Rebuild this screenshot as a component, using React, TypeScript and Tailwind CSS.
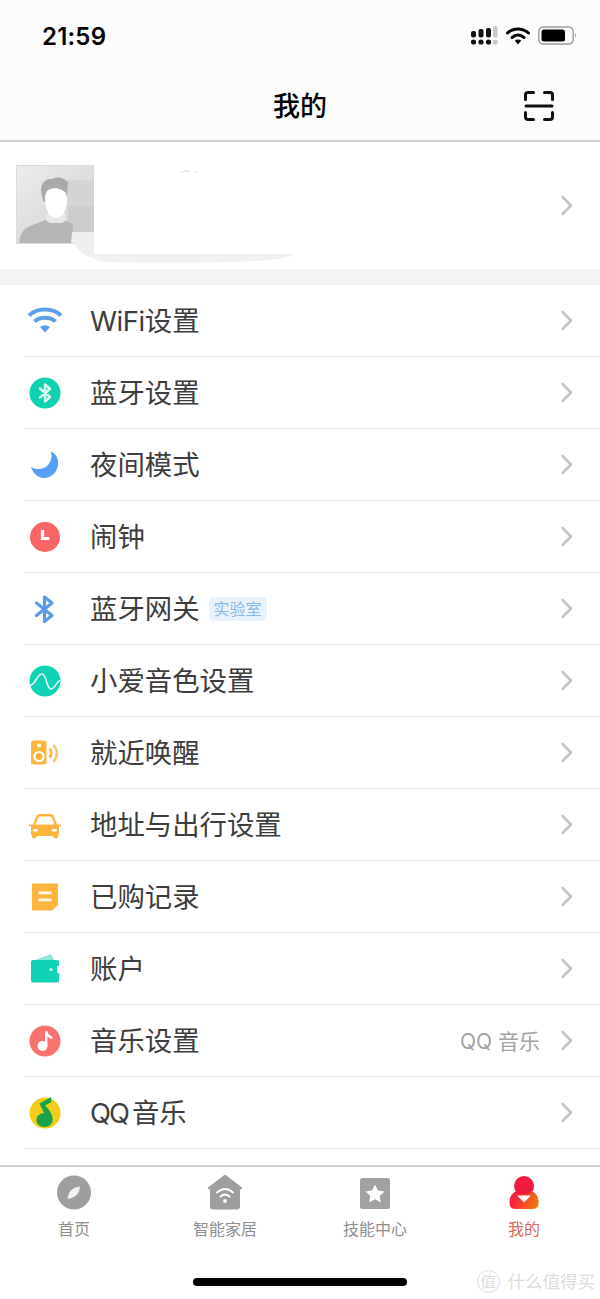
import React from "react";

const cjk = { fontFamily: '"Inter","Noto Sans CJK SC","Noto Sans",sans-serif' };

const Chevron = () => (
  <svg width="14" height="22" viewBox="0 0 14 22" fill="none">
    <path d="M2.5 2 L11 10.5 L2.5 19" stroke="#c4c4c4" strokeWidth="2.6" strokeLinecap="round" strokeLinejoin="round" />
  </svg>
);

const W = 40;
const Wifi = () => (
  <svg width={W} height={W} viewBox="0 0 40 40">
    <path d="M4 14.5 C12 6.5 28 6.5 36 14.5" stroke="#5a9fe8" strokeWidth="4" fill="none" />
    <path d="M9.5 20.5 C15 15.5 25 15.5 30.5 20.5" stroke="#5a9fe8" strokeWidth="4" fill="none" />
    <path d="M15 26 Q20 22.5 25 26 L20 31.5 Z" fill="#5a9fe8" />
  </svg>
);
const BtCircle = () => (
  <svg width={W} height={W} viewBox="0 0 40 40">
    <circle cx="20" cy="20" r="15.5" fill="#0fd1b0" />
    <path d="M15 15.5 L25 24 L20 28.5 V11.5 L25 16 L15 24.5" stroke="#fff" strokeWidth="2.4" fill="none" strokeLinejoin="round" strokeLinecap="round" opacity=".85" />
  </svg>
);
const Moon = () => (
  <svg width={W} height={W} viewBox="0 0 40 40">
    <path d="M25.5 6.5 C31.5 8.5 34 14.5 33 20.5 C31.8 28 25.5 33 19.5 33 C13 33 8 28.5 6 22 C12 25.5 19 24.5 23 20 C26.5 16 27.5 10.5 25.5 6.5 Z" fill="#559ff5" />
  </svg>
);
const Clock = () => (
  <svg width={W} height={W} viewBox="0 0 40 40">
    <circle cx="20" cy="20" r="15" fill="#fb6565" />
    <path d="M17.5 13 V21.5 H24.5" stroke="#fff" strokeWidth="3.2" fill="none" />
  </svg>
);
const Bt = () => (
  <svg width={W} height={W} viewBox="0 0 40 40">
    <path d="M11.5 14 L27 26.5 L19.5 32.5 V8 L27 14 L11.5 26.5" stroke="#5a9ae6" strokeWidth="3.2" fill="none" strokeLinejoin="round" strokeLinecap="round" />
  </svg>
);
const Wave = () => (
  <svg width={W} height={W} viewBox="0 0 40 40">
    <circle cx="20" cy="20" r="15.5" fill="#10d2b4" />
    <path d="M5 24.5 C10 24.5 12 13 17 13 C22 13 21 28 26 28 C30 28 31 21 35 19.5" stroke="#fff" strokeWidth="1.5" fill="none" opacity=".92" />
  </svg>
);
const Speaker = () => (
  <svg width={W} height={W} viewBox="0 0 40 40">
    <rect x="6" y="7.5" width="15.5" height="24" rx="2.2" fill="#fcb63e" />
    <circle cx="14" cy="12.5" r="2" fill="#fff" />
    <circle cx="14" cy="23.5" r="4.6" fill="none" stroke="#fff" strokeWidth="2" />
    <path d="M24.5 15.5 Q28 20 24.5 24.5" stroke="#fcb63e" strokeWidth="2.6" fill="none" />
    <path d="M28.5 12 Q35.5 20.5 28.5 29" stroke="#fcc76a" strokeWidth="2.6" fill="none" />
  </svg>
);
const Car = () => (
  <svg width={W} height={W} viewBox="0 0 40 40">
    <path d="M9 20 L12 12.5 Q12.7 10.2 15 10.2 H25 Q27.3 10.2 28 12.5 L31 20" stroke="#fdb53e" strokeWidth="2.4" fill="none" />
    <path d="M4 19.5 H36 V21 H34 V29 Q34 31 32 31 H8 Q6 31 6 29 V21 H4 Z" fill="#fdb53e" />
    <rect x="7" y="30" width="4.5" height="3.2" rx="1.2" fill="#fdb53e" />
    <rect x="28.5" y="30" width="4.5" height="3.2" rx="1.2" fill="#fdb53e" />
    <ellipse cx="10.5" cy="25.2" rx="2.6" ry="1.5" fill="#fff" />
    <ellipse cx="29.5" cy="25.2" rx="2.6" ry="1.5" fill="#fff" />
  </svg>
);
const Note = () => (
  <svg width={W} height={W} viewBox="0 0 40 40">
    <path d="M7 6.5 H33 V28 L27 33.5 H7 Z" fill="#fdb53e" />
    <rect x="13.5" y="14.5" width="13" height="2.8" fill="#fff" opacity=".9" />
    <rect x="13.5" y="21.5" width="13" height="2.8" fill="#fff" opacity=".9" />
  </svg>
);
const Wallet = () => (
  <svg width={W} height={W} viewBox="0 0 40 40">
    <path d="M10 11 L25 5.5 Q26.5 5 27 6.5 L29 11 Z" fill="#8ee8d8" />
    <path d="M6 13 Q6 11 8 11 H32 Q34 11 34 13 V17 H32 V24 H34 V31 Q34 33.5 32 33.5 H8 Q6 33.5 6 31 Z" fill="#10d2b4" />
    <circle cx="26" cy="20.5" r="1.5" fill="#d5f7f1" />
  </svg>
);
const Music = () => (
  <svg width={W} height={W} viewBox="0 0 40 40">
    <circle cx="20" cy="20" r="15.5" fill="#f97470" />
    <circle cx="17.5" cy="25" r="5" fill="#fff" />
    <path d="M21.2 25 V10.5 Q22.2 15.5 27.2 17" stroke="#fff" strokeWidth="2.4" fill="none" />
  </svg>
);
const QQ = () => (
  <svg width={W} height={W} viewBox="0 0 40 40">
    <circle cx="20" cy="20" r="15.5" fill="#f5cb1c" />
    <path d="M14.5 10.5 L26 4 L26.5 9 L20 12.5 C24 16 28 22 27.5 27 L22 26 L14.5 10.5 Z" fill="#16a34a" />
    <ellipse cx="19.5" cy="27" rx="8.2" ry="7" fill="#16a34a" />
  </svg>
);

const rows: { icon: React.ReactNode; label: React.ReactNode; tag?: string; right?: string }[] = [
  { icon: <Wifi />, label: <><span className="tracking-[-0.4px]">WiFi</span>设置</> },
  { icon: <BtCircle />, label: "蓝牙设置" },
  { icon: <Moon />, label: "夜间模式" },
  { icon: <Clock />, label: "闹钟" },
  { icon: <Bt />, label: "蓝牙网关", tag: "实验室" },
  { icon: <Wave />, label: "小爱音色设置" },
  { icon: <Speaker />, label: "就近唤醒" },
  { icon: <Car />, label: "地址与出行设置" },
  { icon: <Note />, label: "已购记录" },
  { icon: <Wallet />, label: "账户" },
  { icon: <Music />, label: "音乐设置", right: "QQ 音乐" },
  { icon: <QQ />, label: <><span className="mr-[4px] tracking-[-2px]">QQ</span>音乐</> },
];

const Tab = ({ icon, label, active }: { icon: React.ReactNode; label: string; active?: boolean }) => (
  <div className="flex flex-col items-center">
    <div className="h-[44px] w-[44px]">{icon}</div>
    <div className={`mt-[3px] text-[16px] leading-[22px] ${active ? "text-[#d9695a]" : "text-[#8e8e8e]"}`}>{label}</div>
  </div>
);

export default function App() {
  return (
    <div className="relative flex h-[1299px] w-[600px] flex-col overflow-hidden bg-white" style={cjk}>
      {/* status + nav */}
      <div className="flex h-[142px] flex-col border-b-2 border-[#cfcfcf] bg-[#fcfcfc]">
        <div className="flex h-[72px] items-center justify-between pl-[42px] pr-[23px]">
          <span className="pt-[1px] text-[24px] font-semibold tracking-[0.2px] text-black">21:59</span>
          <div className="flex items-center gap-[8px]">
            <svg width="27" height="20" viewBox="0 0 27 20">
              <g fill="#111">
                <rect x="0" y="5" width="5" height="6.5" rx="2" />
                <rect x="7.5" y="3" width="5" height="8.5" rx="2" />
                <rect x="15" y="2" width="5" height="9.5" rx="2" />
                <circle cx="2.5" cy="16" r="2.6" />
                <circle cx="10" cy="16" r="2.6" />
                <circle cx="17.5" cy="16" r="2.6" />
              </g>
              <g fill="#c9c9c9">
                <rect x="22" y="0" width="4.6" height="11.5" rx="2" />
                <circle cx="24.3" cy="16" r="2.6" />
              </g>
            </svg>
            <svg width="24" height="20" viewBox="0 0 24 20">
              <path d="M1.5 7 C7.5 1.5 16.5 1.5 22.5 7" stroke="#000" strokeWidth="3" fill="none" strokeLinecap="round" />
              <path d="M6 11.5 C9.5 8 14.5 8 18 11.5" stroke="#000" strokeWidth="3" fill="none" strokeLinecap="round" />
              <path d="M8.8 14.6 Q12 12.2 15.2 14.6 L12 18.5 Z" fill="#000" />
            </svg>
            <svg width="39" height="20" viewBox="0 0 39 20">
              <rect x="0.8" y="1" width="34.4" height="17" rx="4.5" fill="none" stroke="#9a9a9a" strokeWidth="1.4" />
              <rect x="3.5" y="3.5" width="23.5" height="12" rx="2.5" fill="#000" />
              <path d="M37 7 Q39 9.5 37 12 Z" fill="#9a9a9a" />
            </svg>
          </div>
        </div>
        <div className="relative flex h-[68px] items-center justify-center">
          <span className="text-[27px] font-medium leading-none text-black">我的</span>
          <svg className="absolute right-[46px] top-[19px]" width="30" height="30" viewBox="0 0 30 30" fill="none">
            <path d="M1.5 8.5 V4 Q1.5 1.5 4 1.5 H9.5 M20.5 1.5 H26 Q28.5 1.5 28.5 4 V8.5 M1.5 21.5 V26 Q1.5 28.5 4 28.5 H9.5 M20.5 28.5 H26 Q28.5 28.5 28.5 26 V21.5" stroke="#111" strokeWidth="3" strokeLinecap="round" />
            <path d="M2 15 H28" stroke="#111" strokeWidth="3" strokeLinecap="round" />
          </svg>
        </div>
      </div>

      {/* profile */}
      <div className="flex h-[127px] items-center justify-between pr-[26px]">
        <svg className="self-start" width="320" height="127" viewBox="0 0 320 127">
          <defs>
            <linearGradient id="av" x1="0" y1="0" x2="1" y2="1">
              <stop offset="0" stopColor="#ededed" />
              <stop offset="1" stopColor="#cfcfcf" />
            </linearGradient>
          </defs>
          <path d="M94 112 H295 Q285 119 230 120 Q170 121 105 120 L94 118 Z" fill="#f1f1f1" />
          <rect x="16.5" y="23.5" width="77" height="78" fill="url(#av)" stroke="#dcdcdc" />
          <rect x="68" y="38" width="26" height="52" fill="#d4d4d4" />
          <rect x="68" y="64" width="26" height="26" fill="#cdcdcd" />
          <path d="M72 90 H94 V116 Q78 114 72 96 Z" fill="#efefef" />
          <path d="M19 101 Q20 88 30 84 L46 78 H64 L73 82 L72 101 Z" fill="#b5b5b5" />
          <path d="M72 90 H74 V101 H71 Z" fill="#efefef" />
          <rect x="46" y="70" width="20" height="11" rx="5" fill="#e8e8e8" />
          <path d="M43 58 Q39 46 43 41 Q48 36 52 37 Q60 33 68 40 L67 56 L44 60 Z" fill="#a9a9a9" />
          <path d="M45 56 Q45 46 56 46 Q67 48 67 56 Q67 70 60 75 Q56 77 52 75 Q45 70 45 56 Z" fill="#fff" />
          <path d="M181 31 Q186 27 190 30 M194 29 L197 31" stroke="#d8d8d8" strokeWidth="1" fill="none" />
        </svg>
        <Chevron />
      </div>
      <div className="h-[16px] bg-[#f4f4f4]" />

      {/* list */}
      <div className="flex-1 pl-[24px]">
        {rows.map((r, i) => (
          <div key={i} className="flex h-[72px] items-center border-b border-[#ececec] pr-[26px]">
            <div className="flex w-[42px] justify-center">{r.icon}</div>
            <span className="ml-[24px] pt-[2px] text-[27.4px] leading-none text-[#3d3d3d]">{r.label}</span>
            {r.tag && (
              <span className="ml-[9px] rounded-[5px] bg-[#e8f2fc] px-[5px] py-[2px] text-[16px] leading-[20px] text-[#8ab8e8]">{r.tag}</span>
            )}
            <div className="flex-1" />
            {r.right && <span className="mr-[20px] pt-[1px] text-[21px] leading-none text-[#a3a3a3]">{r.right}</span>}
            <Chevron />
          </div>
        ))}
      </div>

      {/* tab bar */}
      <div className="h-[134px] border-t-2 border-[#d2d2d2] bg-white">
        <div className="grid grid-cols-[148px_154px_146px_152px] pt-[4px]">
          <Tab
            label="首页"
            icon={
              <svg width="44" height="44" viewBox="0 0 44 44">
                <circle cx="22" cy="21.5" r="17" fill="#9e9e9e" />
                <path d="M28 15.5 Q27.5 22 23.5 25 Q20.5 27 15.5 28 Q16.5 21.5 19.5 18.8 Q23 16 28 15.5 Z" fill="#f7f2f0" />
              </svg>
            }
          />
          <Tab
            label="智能家居"
            icon={
              <svg width="44" height="44" viewBox="0 0 44 44">
                <path d="M22 4 L39 17 L36.5 18.5 V36 Q36.5 38 34.5 38 H9.5 Q7.5 38 7.5 36 V18.5 L5 17 Z" fill="#9e9e9e" stroke="#9e9e9e" strokeWidth="1" strokeLinejoin="round" />
                <path d="M14 21.5 Q22 14.5 30 21.5" stroke="#fff" strokeWidth="2" fill="none" strokeLinecap="round" />
                <path d="M17.5 25.5 Q22 21.5 26.5 25.5" stroke="#fff" strokeWidth="2" fill="none" strokeLinecap="round" />
                <circle cx="22" cy="30" r="1.9" fill="#fff" />
              </svg>
            }
          />
          <Tab
            label="技能中心"
            icon={
              <svg width="44" height="44" viewBox="0 0 44 44">
                <rect x="7" y="7" width="30" height="31" rx="2.5" fill="#a2a2a2" />
                <path d="M22 13.5 L24.9 19.6 L31.5 20.4 L26.7 25 L27.9 31.5 L22 28.3 L16.1 31.5 L17.3 25 L12.5 20.4 L19.1 19.6 Z" fill="#fff" />
              </svg>
            }
          />
          <Tab
            label="我的"
            active
            icon={
              <svg width="44" height="44" viewBox="0 0 44 44">
                <defs>
                  <linearGradient id="me" x1="0" y1="0" x2="1" y2="0.4">
                    <stop offset="0.3" stopColor="#f5203e" />
                    <stop offset="1" stopColor="#f4700f" />
                  </linearGradient>
                </defs>
                <circle cx="22" cy="15" r="10" fill="#f21b3f" />
                <path d="M14.5 20 Q8 23 7.5 30 Q7 38 13 38 H31 Q37 38 36.5 30 Q36 23 29.5 20 Q22 27 14.5 20 Z" fill="url(#me)" />
                <path d="M15 24.5 H29 L22 31.5 Z" fill="#fff" />
              </svg>
            }
          />
        </div>
      </div>

      <div className="absolute bottom-[13px] left-[193px] h-[8px] w-[214px] rounded-full bg-black" />

      {/* watermark */}
      <div className="absolute bottom-[6px] right-[5px] flex items-center gap-[8px] text-[#dcdcdc]">
        <span className="flex h-[23px] w-[23px] items-center justify-center rounded-full border border-[#dcdcdc] text-[15px] leading-none">值</span>
        <span className="text-[17.5px] leading-none">什么值得买</span>
      </div>
    </div>
  );
}
